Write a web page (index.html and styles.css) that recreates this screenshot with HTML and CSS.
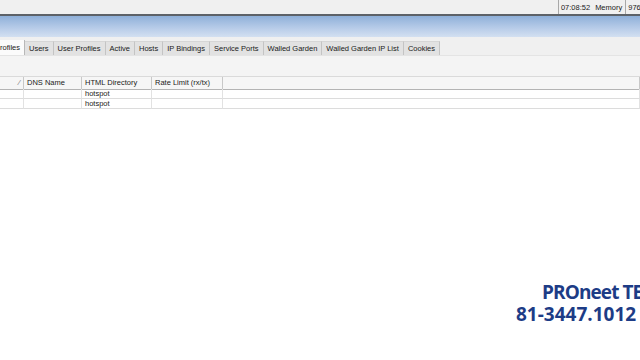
FILE: index.html
```html
<!DOCTYPE html>
<html lang="en">
<head>
  <title>Hotspot</title>
  <meta charset="utf-8">
  <link rel="stylesheet" href="styles.css">
</head>
<body>
	<div class="statusbar">
		<span class="status-item">07:08:52<span class="label">Memory</span></span>
		<span class="status-item">976.0 MiB</span>
	</div>
	<div class="titlebar"></div>
	<div class="tabs">
		<div class="tab selected">Profiles</div>
		<div class="tab">Users</div>
		<div class="tab">User Profiles</div>
		<div class="tab">Active</div>
		<div class="tab">Hosts</div>
		<div class="tab">IP Bindings</div>
		<div class="tab">Service Ports</div>
		<div class="tab">Walled Garden</div>
		<div class="tab">Walled Garden IP List</div>
		<div class="tab">Cookies</div>
	</div>
	<div class="toolbar"></div>
	<div class="grid">
		<div class="cell head sort">&#8260;</div>
		<div class="cell head">DNS Name</div>
		<div class="cell head">HTML Directory</div>
		<div class="cell head">Rate Limit (rx/tx)</div>
		<div class="cell head"></div>

		<div class="cell"></div>
		<div class="cell"></div>
		<div class="cell">hotspot</div>
		<div class="cell"></div>
		<div class="cell"></div>

		<div class="cell"></div>
		<div class="cell"></div>
		<div class="cell">hotspot</div>
		<div class="cell"></div>
		<div class="cell"></div>
	</div>
	<div class="brand">
		<div class="brand-name">PROneet TE</div>
		<div>81-3447.1012</div>
	</div>
</body>
</html>
```

FILE: styles.css
```css
html, body
{
	margin: 0;
	padding: 0;
	width: 640px;
	height: 360px;
	overflow: hidden;
	background: #ffffff;
	font-family: "Liberation Sans", Arial, sans-serif;
	font-size: 7.5px;
	color: #1a1a1a;
	position: relative;
}
.statusbar
{
	height: 14px;
	background: #f0f0f0;
	display: flex;
	justify-content: flex-end;
	align-items: stretch;
	margin-right: -25px;
}
.status-item
{
	display: flex;
	align-items: center;
	padding: 0 3px 0 2px;
	border-left: 1px solid #a8a8a8;
	white-space: nowrap;
}
.label
{
	margin-left: 5px;
}
.titlebar
{
	height: 21px;
	border-top: 2px solid #5d6268;
	background: linear-gradient(#8fb0d9, #b9cde9 60%, #d3e0f1);
}
.tabs
{
	display: flex;
	align-items: flex-end;
	height: 18px;
	background: #f0f0f0;
	margin-left: -9px;
	border-bottom: 1px solid #e4e4e4;
}
.tab
{
	height: 13px;
	line-height: 13px;
	padding: 0 4px;
	background: #e2e2e2;
	border-right: 1px solid #c4c4c4;
	border-top: 1px solid #d6d6d6;
	white-space: nowrap;
}
.tab.selected
{
	height: 15px;
	line-height: 16px;
	background: #fbfbfb;
	border-right: 1px solid #b8b8b8;
	border-top: none;
}
.toolbar
{
	height: 20px;
	background: #f4f4f4;
}
.grid
{
	display: grid;
	grid-template-columns: 24px 58px 70px 71px 1fr;
	grid-template-rows: 12px 10px 10px;
	border-top: 1px solid #dadada;
}
.cell
{
	line-height: 10px;
	padding-left: 3px;
	border-right: 1px solid #e2e2e2;
	border-bottom: 1px solid #dcdcdc;
	white-space: nowrap;
	overflow: hidden;
}
.cell.head
{
	height: 12px;
	line-height: 12px;
	background: #f6f6f6;
	border-right: 1px solid #c8c8c8;
	border-bottom: 1px solid #b4b4b4;
}
.cell.sort
{
	text-align: right;
	padding-right: 3px;
	color: #707070;
}
.brand
{
	position: absolute;
	right: 0;
	top: 281px;
	width: 124px;
	font-family: "Open Sans", sans-serif;
	font-weight: bold;
	font-size: 19px;
	line-height: 22px;
	color: #1d3c86;
	white-space: nowrap;
}
.brand-name
{
	padding-left: 26px;
	letter-spacing: -0.9px;
}
```
